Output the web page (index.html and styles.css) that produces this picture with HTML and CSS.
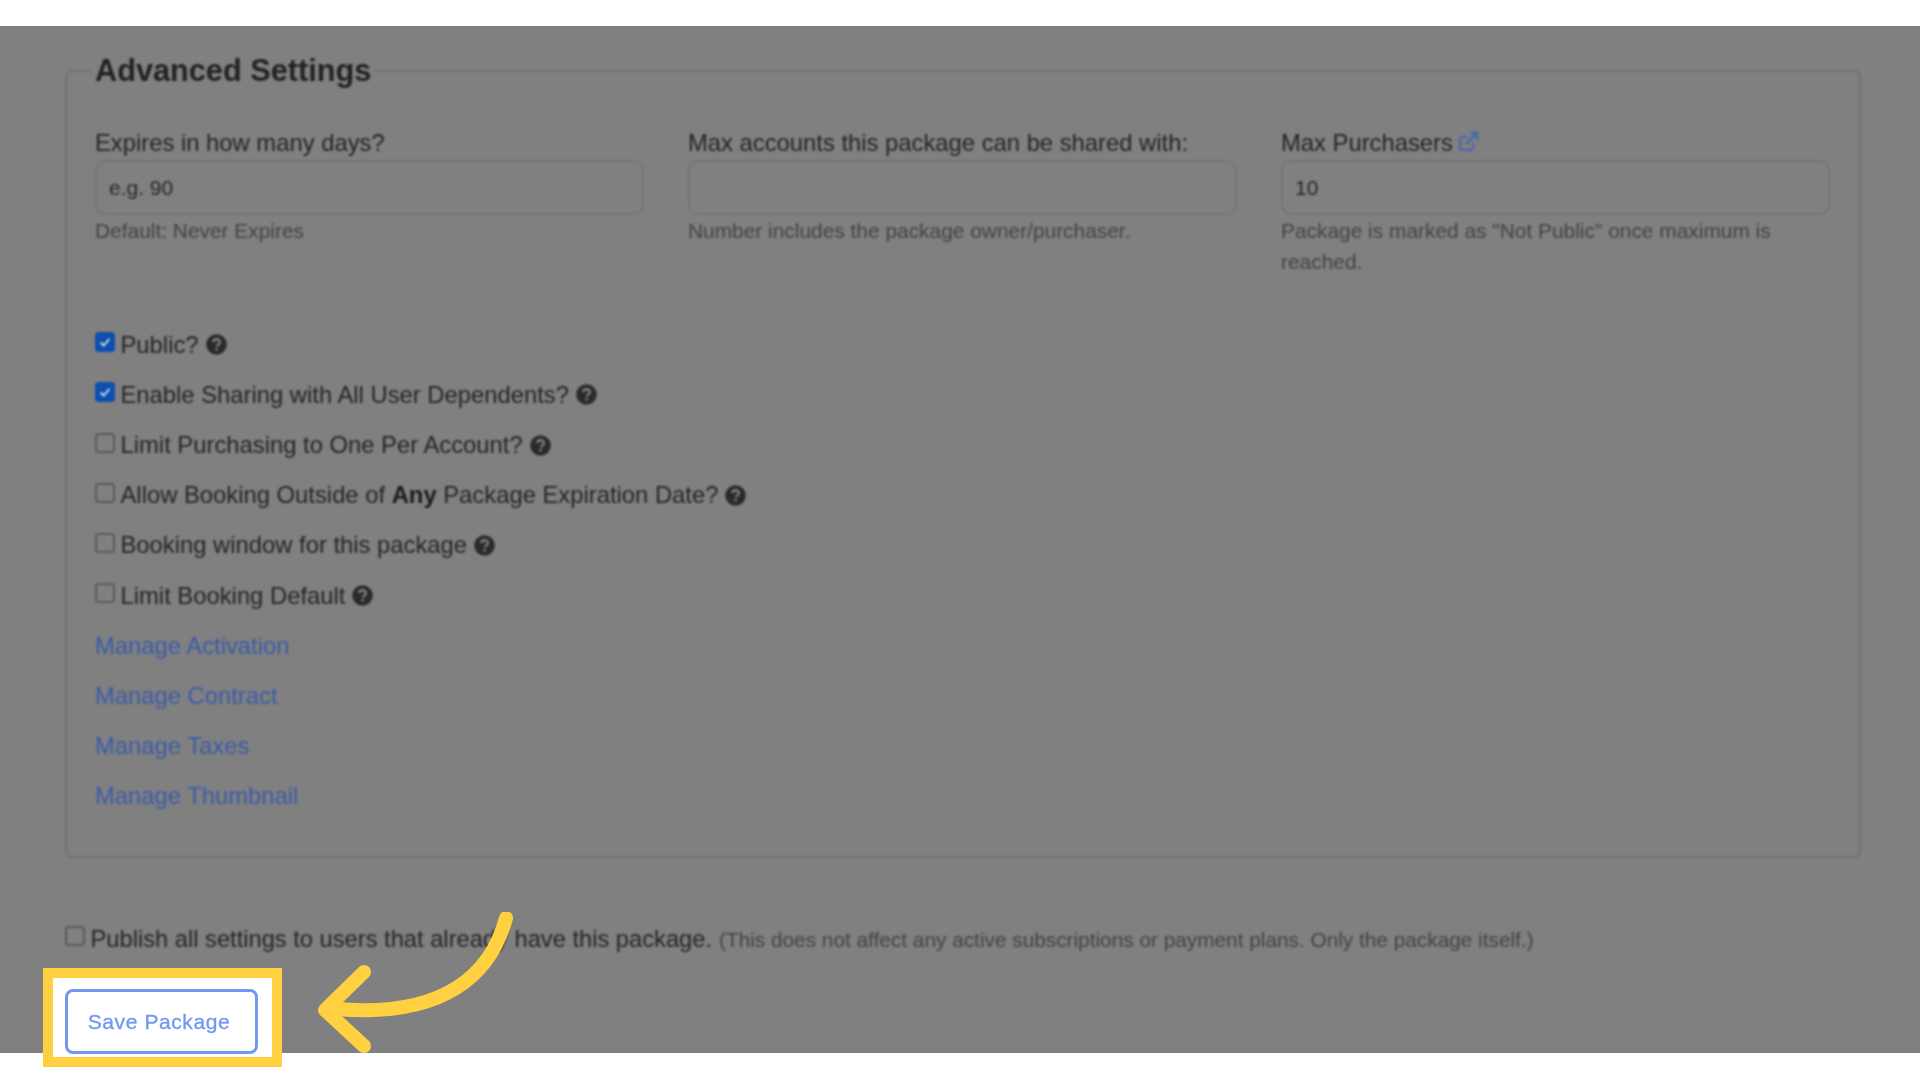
FILE: index.html
```html
<!DOCTYPE html>
<html lang="en">
<head>
<meta charset="utf-8">
<title>Advanced Settings</title>
<link rel="stylesheet" href="styles.css">
</head>
<body>
<div class="page">
  <div class="band-top"></div>
  <main class="dim">
    <div class="content">
      <fieldset class="panel">
        <legend>Advanced Settings</legend>
        <div class="fields">
          <div class="field">
            <label>Expires in how many days?</label>
            <input class="text-input" type="text" placeholder="e.g. 90">
            <p class="help">Default: Never Expires</p>
          </div>
          <div class="field">
            <label>Max accounts this package can be shared with:</label>
            <input class="text-input" type="text">
            <p class="help">Number includes the package owner/purchaser.</p>
          </div>
          <div class="field">
            <label>Max Purchasers<svg class="ext" viewBox="0 0 20 20" aria-hidden="true"><path d="M14.5 11v5a2 2 0 0 1-2 2H4a2 2 0 0 1-2-2V7.5a2 2 0 0 1 2-2h5.5" fill="none" stroke="currentColor" stroke-width="2"/><path d="M8 12 17 3M11.5 1.8h6.7v6.7" fill="none" stroke="currentColor" stroke-width="2.4"/></svg></label>
            <input class="text-input" type="text" value="10">
            <p class="help">Package is marked as "Not Public" once maximum is reached.</p>
          </div>
        </div>
        <ul class="options">
          <li class="option"><span class="box on"><svg viewBox="0 0 18 18"><path d="M4 9.5 7.5 13 14 5.5" fill="none" stroke="#c8d4e8" stroke-width="2.2"/></svg></span><span>Public?</span><svg class="q" viewBox="0 0 20 20"><use href="#q"/></svg></li>
          <li class="option"><span class="box on"><svg viewBox="0 0 18 18"><path d="M4 9.5 7.5 13 14 5.5" fill="none" stroke="#c8d4e8" stroke-width="2.2"/></svg></span><span>Enable Sharing with All User Dependents?</span><svg class="q" viewBox="0 0 20 20"><use href="#q"/></svg></li>
          <li class="option"><span class="box"></span><span>Limit Purchasing to One Per Account?</span><svg class="q" viewBox="0 0 20 20"><use href="#q"/></svg></li>
          <li class="option"><span class="box"></span><span>Allow Booking Outside of <b>Any</b> Package Expiration Date?</span><svg class="q" viewBox="0 0 20 20"><use href="#q"/></svg></li>
          <li class="option"><span class="box"></span><span>Booking window for this package</span><svg class="q" viewBox="0 0 20 20"><use href="#q"/></svg></li>
          <li class="option"><span class="box"></span><span>Limit Booking Default</span><svg class="q" viewBox="0 0 20 20"><use href="#q"/></svg></li>
          <li class="option"><a href="#">Manage Activation</a></li>
          <li class="option"><a href="#">Manage Contract</a></li>
          <li class="option"><a href="#">Manage Taxes</a></li>
          <li class="option"><a href="#">Manage Thumbnail</a></li>
        </ul>
      </fieldset>
      <div class="publish">
        <span class="box box-raised"></span>
        <span>Publish all settings to users that already have this package.</span>
        <small>(This does not affect any active subscriptions or payment plans. Only the package itself.)</small>
      </div>
    </div>
  </main>
  <div class="band-bottom"></div>

  <div class="spotlight"><button class="save" type="button">Save Package</button></div>
  <svg class="arrow" viewBox="0 0 220 170" aria-hidden="true">
    <path d="M189 6C174 62 128 106 20 97" fill="none" stroke="#ffd03f" stroke-width="14" stroke-linecap="round"/>
    <path d="M47 60 8 98 47 134" fill="none" stroke="#ffd03f" stroke-width="14" stroke-linecap="round" stroke-linejoin="round"/>
  </svg>
</div>
<svg class="defs" aria-hidden="true">
  <symbol id="q" viewBox="0 0 20 20">
    <circle cx="10" cy="10" r="9.8" fill="#2a2a2a"/>
    <path d="M6.8 7.8C7 5.9 8.3 5 10.1 5c1.9 0 3.2 1.1 3.2 2.7 0 1.3-.8 2-1.8 2.6-.8.5-1.1.9-1.1 1.7" fill="none" stroke="#808080" stroke-width="2.2"/>
    <rect x="9" y="13.3" width="2.3" height="2.3" fill="#808080"/>
  </symbol>
</svg>
</body>
</html>
```

FILE: styles.css
```css
* { box-sizing: border-box; }
html, body { margin: 0; height: 100%; background: #fff; overflow: hidden; }
body { font-family: "Liberation Sans", Arial, sans-serif; color: #333; }

.page { position: relative; width: 1920px; height: 1080px; display: flex; flex-direction: column; }
.band-top { height: 26px; flex: none; background: #fff; }
.band-bottom { flex: 1; background: #fff; }
.dim { height: 1027px; flex: none; background: #808080; overflow: hidden; }
.content { padding: 27px 59px 0 65px; filter: blur(0.8px); }

.panel {
  margin: 0; min-width: 0; height: 805px;
  padding: 0 30px 0 28px;
  border: 2px solid #737373; border-radius: 7px;
}
.panel legend {
  margin-left: -4px; padding: 0 4px;
  font-size: 30.7px; line-height: 36px; font-weight: 700; color: #222;
}
.fields { display: grid; grid-template-columns: repeat(3, 549px); column-gap: 44px; padding-top: 37px; height: 230.6px; }
.field { display: flex; flex-direction: column; }
.field label { font-size: 23.8px; line-height: 34px; height: 34px; color: #242424; white-space: nowrap; }
.ext { width: 21px; height: 21px; color: #4a68ad; vertical-align: -1px; margin-left: 5px; }
.text-input {
  width: 100%; height: 55px; padding: 0 12px;
  border: 2px solid #757575; border-radius: 10px; background: transparent;
  font: 21px "Liberation Sans", Arial, sans-serif; color: #242424; outline: none;
}
.text-input::placeholder { color: #282828; opacity: 1; }
.help { margin: 0; font-size: 20.9px; line-height: 31px; color: #424242; }

.options { list-style: none; margin: 0; padding: 0; }
.option { display: flex; align-items: center; height: 50.2px; font-size: 23.8px; color: #242424; white-space: pre; }
.option b { color: #1a1a1a; }
.option a { color: #3a5aa8; text-decoration: none; }
.box {
  width: 20px; height: 20px; flex: none; margin-right: 5.5px; margin-top: -5px;
  border: 2px solid #5a5a5a; border-radius: 4px; display: block;
}
.box-raised { margin-top: -7px; }
.box.on { background: #0d4fae; border-color: #0d4fae; }
.box svg { display: block; width: 100%; height: 100%; margin: 0; }
.q { width: 21px; height: 21px; flex: none; margin-left: 7px; }

.publish { display: flex; align-items: center; margin-top: 64px; height: 34px; font-size: 23.7px; color: #242424; white-space: pre; }
.publish small { font-size: 20.8px; color: #424242; margin-left: 7px; margin-top: 2px; }

.spotlight {
  position: absolute; left: 43px; top: 968px; width: 239px; height: 99px;
  padding: 11px 14px 3px 12px;
  background: #fff; border: 10px solid #ffd03f;
}
.save {
  display: block; width: 100%; height: 100%; padding: 0 5px 0 0;
  background: #fff; border: 3px solid #7398f0; border-radius: 8px;
  font: 21px "Liberation Sans", Arial, sans-serif; letter-spacing: 0.6px; color: #7398f0;
  filter: blur(0.5px); -webkit-text-stroke: 0.35px #7398f0;
}
.arrow { position: absolute; left: 317px; top: 912px; width: 220px; height: 170px; }
.defs { position: absolute; width: 0; height: 0; }
```
